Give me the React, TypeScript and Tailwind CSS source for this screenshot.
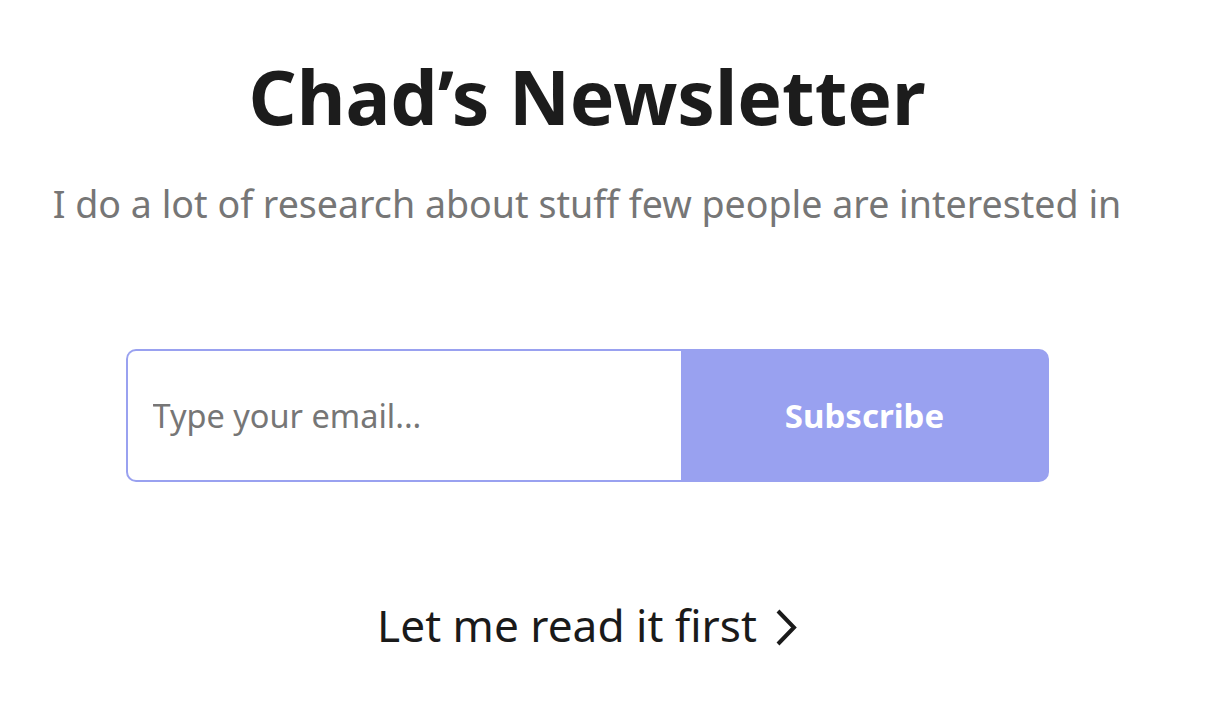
export default function App() {
  return (
    <div className="min-h-screen bg-white flex justify-start" style={{ fontFamily: '"Noto Sans", "Open Sans", sans-serif' }}>
      <div className="w-[1174px] flex flex-col items-center">
        <h1 className="mt-[41px] text-[75px] leading-[110px] font-bold text-[#1c1c1c]">Chad’s Newsletter</h1>
        <p className="mt-[28px] text-[37.6px] leading-[50px] text-[#767676]">
          I do a lot of research about stuff few people are interested in
        </p>

        <form className="mt-[120px] w-[923px] h-[133px] flex" onSubmit={(e) => e.preventDefault()}>
          <input
            type="email"
            placeholder="Type your email..."
            className="flex-1 min-w-0 h-full border-2 border-[#99a1f0] border-r-0 rounded-l-[10px] pl-[25px] text-[32.5px] text-[#333] placeholder:text-[#767676] outline-none"
          />
          <button
            type="submit"
            className="w-[368px] h-full bg-[#99a1f0] rounded-r-[10px] text-white text-[33px] font-bold"
          >
            Subscribe
          </button>
        </form>

        <a href="#" className="mt-[113px] flex items-center gap-[18px] text-[44.2px] leading-[60px] text-[#1a1a1a]">
          Let me read it first
          <svg width="22" height="37" viewBox="0 0 22 37" fill="none" className="mt-[4px]">
            <polyline points="3,2 19,18.5 3,35" stroke="#1a1a1a" strokeWidth="4" />
          </svg>
        </a>
      </div>
    </div>
  );
}
